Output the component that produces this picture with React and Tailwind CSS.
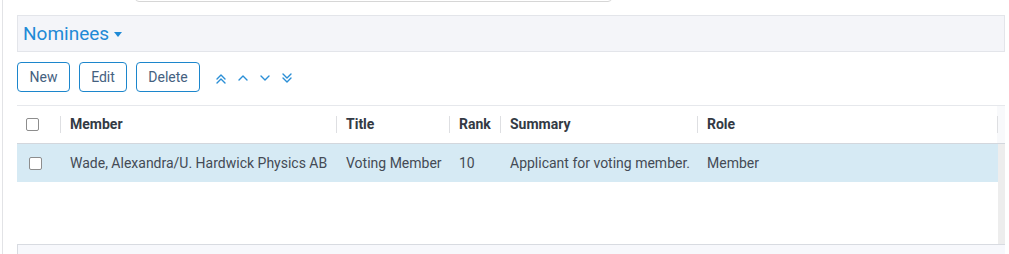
import React from 'react'

const columns = [
  { key: 'member', label: 'Member', w: 'w-[276px]' },
  { key: 'title', label: 'Title', w: 'w-[113px]' },
  { key: 'rank', label: 'Rank', w: 'w-[51px]' },
  { key: 'summary', label: 'Summary', w: 'w-[197px]' },
  { key: 'role', label: 'Role', w: 'w-[300px]' },
]

const rows = [
  {
    id: 1,
    member: 'Wade, Alexandra/U. Hardwick Physics AB',
    title: 'Voting Member',
    rank: '10',
    summary: 'Applicant for voting member.',
    role: 'Member',
  },
]

function Chevron({ dir, double }) {
  const up = dir === 'up'
  const paths = double
    ? up
      ? ['M1 6 5 2 9 6', 'M1 10 5 6 9 10']
      : ['M1 1 5 5 9 1', 'M1 5 5 9 9 5']
    : up
      ? ['M1 6 5 2 9 6']
      : ['M1 2 5 6 9 2']
  return (
    <svg width="10" height={double ? 11 : 8} viewBox={double ? '0 0 10 11' : '0 0 10 8'} fill="none">
      {paths.map((d) => (
        <path key={d} d={d} stroke="#2b8fd6" strokeWidth="1.4" strokeLinecap="round" strokeLinejoin="round" />
      ))}
    </svg>
  )
}

function Box() {
  return <span className="block h-[13px] w-[13px] rounded-[2px] border border-[#8d8d8d] bg-white" />
}

export default function App() {
  return (
    <div className="h-[254px] w-[1009px] overflow-hidden bg-white font-['Roboto',sans-serif]">
      <div className="ml-[2px] flex h-full flex-col border-l border-[#e2e3e6] pl-[14px] pr-[4px]">
        <div className="-mt-[28px] ml-[118px] h-[30px] w-[477px] shrink-0 rounded-[4px] border border-[#d6d6d6]" />

        <div className="mt-[13px] flex h-[37px] shrink-0 items-center border border-[#e3e5ea] bg-[#f4f5f9] pl-[5px]">
          <span className="text-[19px] leading-none text-[#1f8ad6]">Nominees</span>
          <span className="ml-[5px] mt-[2px] h-0 w-0 border-x-[4px] border-t-[5px] border-x-transparent border-t-[#1f8ad6]" />
        </div>

        <div className="mt-[10px] flex shrink-0 items-center">
          <button className="h-[30px] w-[53px] rounded-[4px] border border-[#1c86cc] text-[14px] text-[#45617f]">New</button>
          <button className="ml-[9px] h-[30px] w-[48px] rounded-[4px] border border-[#1c86cc] text-[14px] text-[#45617f]">Edit</button>
          <button className="ml-[9px] h-[30px] w-[64px] rounded-[4px] border border-[#1c86cc] text-[14px] text-[#45617f]">Delete</button>
          <div className="ml-[16px] flex items-center gap-[12px] pt-[2px]">
            <Chevron dir="up" double />
            <Chevron dir="up" />
            <Chevron dir="down" />
            <Chevron dir="down" double />
          </div>
        </div>

        <div className="mt-[13px] shrink-0 border-t border-[#e6e8ec]">
          <div className="flex h-[38px] items-center border-b border-[#d3d7dd] text-[14px] font-bold text-[#333a44]">
            <div className="flex h-full w-[43px] items-center pl-[9px]">
              <Box />
            </div>
            {columns.map((c) => (
              <div key={c.key} className={`flex h-full items-center ${c.w}`}>
                <span className="h-[17px] w-px bg-[#dedfe2]" />
                <span className="pl-[9px]">{c.label}</span>
              </div>
            ))}
            <div className="flex h-full flex-1 items-center bg-[#f8f9fb]">
              <span className="h-[17px] w-px bg-[#dedfe2]" />
            </div>
          </div>

          <div className="flex">
            <div className="h-[100px] w-[981px]">
              {rows.map((r) => (
                <div key={r.id} className="flex h-[38px] items-center bg-[#d6eaf4] text-[14px] text-[#444a55]">
                  <div className="w-[43px] pl-[12px]">
                    <Box />
                  </div>
                  {columns.map((c) => (
                    <div key={c.key} className={`whitespace-nowrap pl-[10px] ${c.w}`}>
                      {r[c.key]}
                    </div>
                  ))}
                </div>
              ))}
            </div>
            <div className="flex-1 bg-[#ededed]" />
          </div>

          <div className="h-[12px] border-l border-t border-[#d8dbe1] bg-[#f7f8fc]" />
        </div>
      </div>
    </div>
  )
}
